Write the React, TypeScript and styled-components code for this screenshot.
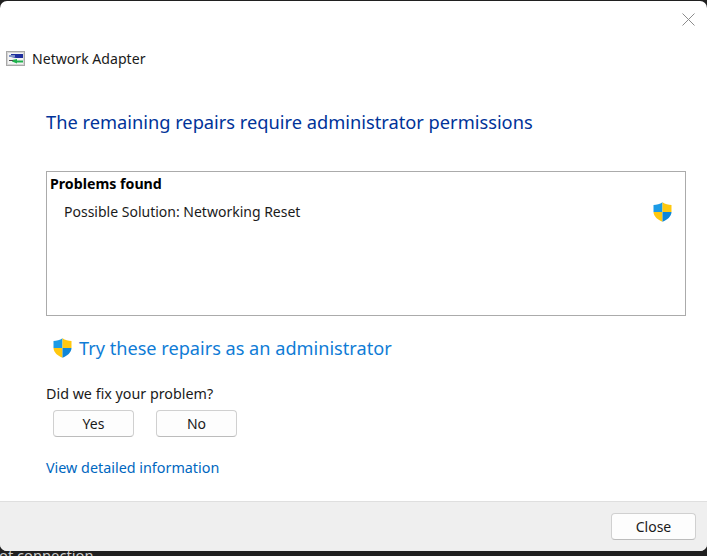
import React from "react";
import styled, { createGlobalStyle } from "styled-components";

const GlobalStyle = createGlobalStyle`
  html, body {
    margin: 0;
    padding: 0;
    background: #202020;
  }
  * {
    box-sizing: border-box;
  }
`;

const Desktop = styled.div`
  width: 707px;
  height: 556px;
  overflow: hidden;
  padding-top: 1px;
  background: #202020;
  font-family: "Noto Sans", "Open Sans", sans-serif;
  color: #1a1a1a;
`;

const Dialog = styled.div`
  width: 707px;
  height: 550px;
  display: flex;
  flex-direction: column;
  background: #fff;
  border-radius: 7px;
  overflow: hidden;
`;

const Content = styled.div`
  flex: 1;
  display: flex;
  flex-direction: column;
`;

const TitleBar = styled.div`
  height: 35px;
  display: flex;
  justify-content: flex-end;
  padding: 12px 12px 0 0;
`;

const CloseX = styled.button`
  width: 13px;
  height: 13px;
  padding: 0;
  border: 0;
  background: none;
  color: #8c8c8c;
  display: flex;
`;

const AppRow = styled.div`
  height: 44px;
  display: flex;
  align-items: center;
  gap: 7px;
  padding-left: 6px;
  font-size: 14.1px;
`;

const Heading = styled.h1`
  margin: 29px 0 0 46px;
  font-size: 18.25px;
  line-height: 26px;
  font-weight: 400;
  color: #003399;
`;

const ProblemBox = styled.div`
  margin: 36px 21px 0 46px;
  height: 145px;
  border: 1px solid #ababab;
  padding: 2px 3px;
`;

const BoxTitle = styled.div`
  font-size: 14.2px;
  line-height: 20px;
  font-weight: 700;
  color: #000;
`;

const SolutionRow = styled.div`
  display: flex;
  justify-content: space-between;
  align-items: center;
  margin-top: 7px;
  padding: 0 10px 0 14px;
  font-size: 14px;
  line-height: 22px;
`;

const RepairLink = styled.a`
  margin: 20px 0 0 53px;
  display: flex;
  align-items: center;
  gap: 7px;
  height: 24px;
  font-size: 18.15px;
  color: #0f7cd6;
`;

const Question = styled.div`
  margin: 24px 0 0 46px;
  font-size: 14.3px;
  line-height: 20px;
`;

const AnswerRow = styled.div`
  margin: 6px 0 0 53px;
  display: flex;
  gap: 22px;
`;

const PushButton = styled.button<{ $wide?: boolean }>`
  width: ${(p) => (p.$wide ? 85 : 81)}px;
  height: 27px;
  padding: 0;
  background: #fdfdfd;
  border: 1px solid #d0d0d0;
  border-bottom-color: #bcbcbc;
  border-radius: 4px;
  font-family: inherit;
  font-size: 14px;
  color: #1a1a1a;
`;

const DetailsLink = styled.a`
  margin: 21px 0 0 46px;
  font-size: 14.35px;
  line-height: 20px;
  color: #0067c0;
`;

const Footer = styled.div`
  height: 50px;
  display: flex;
  justify-content: flex-end;
  padding: 11px 11px 0 0;
  background: #efefef;
  border-top: 1px solid #dfdfdf;
`;

const BehindText = styled.div`
  margin-left: -1px;
  font-size: 14.7px;
  line-height: 9px;
  color: #cfcfcf;
  white-space: nowrap;
`;

const Shield = () => (
  <svg width="19" height="20" viewBox="0 0 19 20" aria-hidden="true">
    <path d="M9.5 0.3C7 2.1 3.5 2.9 0.5 3V10H9.5Z" fill="#1c9be6" />
    <path d="M9.5 0.3C12 2.1 15.5 2.9 18.5 3V10H9.5Z" fill="#ffc80f" />
    <path d="M0.5 10C0.7 14.6 4.8 17.9 9.5 19.7V10Z" fill="#ffc80f" />
    <path d="M18.5 10C18.3 14.6 14.2 17.9 9.5 19.7V10Z" fill="#0f86d8" />
  </svg>
);

const AdapterIcon = () => (
  <svg width="19" height="15" viewBox="0 0 19 15" aria-hidden="true">
    <rect x="0.5" y="0.5" width="18" height="14" fill="#d4d4d4" stroke="#a8a8a8" />
    <rect x="2" y="2" width="15" height="11" fill="#f4f4f4" />
    <path d="M5 3H17V7H10L5 6Z" fill="#1f2f9e" />
    <path d="M3 4H9V6H3Z" fill="#7f93c6" />
    <path d="M6 9L11 8V9.5H17V11.5H11V12.5L6 10.5Z" fill="#1fb14c" />
    <path d="M3 9H7V10H3Z" fill="#4a4a4a" />
  </svg>
);

export default function App() {
  return (
    <>
      <GlobalStyle />
      <Desktop>
        <Dialog>
          <Content>
            <TitleBar>
              <CloseX aria-label="Close">
                <svg width="13" height="13" viewBox="0 0 13 13">
                  <path d="M0.5 0.5L12.5 12.5M12.5 0.5L0.5 12.5" stroke="currentColor" fill="none" />
                </svg>
              </CloseX>
            </TitleBar>
            <AppRow>
              <AdapterIcon />
              Network Adapter
            </AppRow>
            <Heading>The remaining repairs require administrator permissions</Heading>
            <ProblemBox>
              <BoxTitle>Problems found</BoxTitle>
              <SolutionRow>
                Possible Solution: Networking Reset
                <Shield />
              </SolutionRow>
            </ProblemBox>
            <RepairLink>
              <Shield />
              Try these repairs as an administrator
            </RepairLink>
            <Question>Did we fix your problem?</Question>
            <AnswerRow>
              <PushButton>Yes</PushButton>
              <PushButton>No</PushButton>
            </AnswerRow>
            <DetailsLink>View detailed information</DetailsLink>
          </Content>
          <Footer>
            <PushButton $wide>Close</PushButton>
          </Footer>
        </Dialog>
        <BehindText>ot connection</BehindText>
      </Desktop>
    </>
  );
}
